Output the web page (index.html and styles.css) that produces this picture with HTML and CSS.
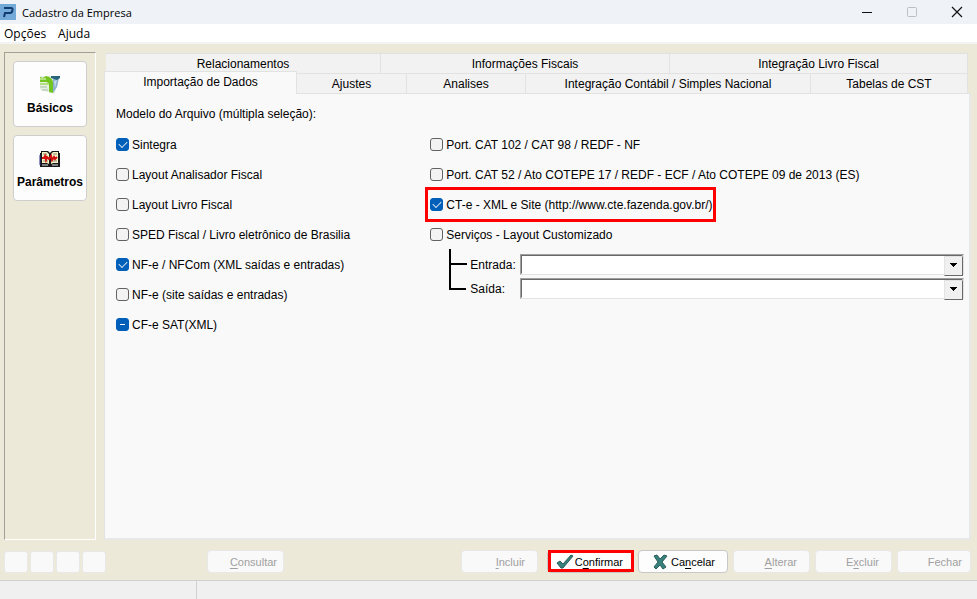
FILE: index.html
```html
<!DOCTYPE html>
<html lang="pt-BR">
<head>
    <meta charset="UTF-8">
    <meta name="viewport" content="width=device-width, initial-scale=1.0">
    <title>Cadastro da Empresa</title>
    <link rel="stylesheet" href="styles.css">
</head>
<body>

    <header class="titlebar">
        <svg class="logo" width="16" height="16" viewBox="0 0 16 16">
            <rect width="16" height="16" fill="#74aad8"/>
            <path d="M4 4H11Q13 4 12.500 6Q12 9 10 9H5L4 13" fill="none" stroke="#123c70" stroke-width="2"/>
        </svg>
        <h1>Cadastro da Empresa</h1>
        <div class="window-buttons">
            <button type="button" aria-label="Minimizar"><svg width="12" height="12"><path d="M1 6.500H11" stroke="#111"/></svg></button>
            <button type="button" aria-label="Maximizar" disabled><svg width="12" height="12"><rect x="1.500" y="1.500" width="9" height="9" rx="1" fill="none" stroke="#bcc0c4"/></svg></button>
            <button type="button" aria-label="Fechar janela"><svg width="12" height="12"><path d="M1 1L11 11M11 1L1 11" stroke="#111" stroke-width="1.200"/></svg></button>
        </div>
    </header>

    <nav class="menubar">
        <button type="button">Opções</button>
        <button type="button">Ajuda</button>
    </nav>

    <div class="workspace">
        <aside class="sidebar">
            <button type="button" class="side-button">
                <svg width="22" height="20" viewBox="0 0 22 20">
                    <path d="M1 1H14L19 3L16 19L9 17L1 15Z" fill="#e6f0e2"/>
                    <path d="M1 2Q4 4 7 1Q13 2 14 7V18L10 17V10L8 7H1Z" fill="#74c41f"/>
                    <path d="M1 4H7M1 9H10" stroke="#b2e07c" stroke-width="2"/>
                    <path d="M14 4L20 3L18 12L14 18Z" fill="#8aafcc"/>
                    <path d="M15 6L18 5L16 13Z" fill="#c3dbe8"/>
                    <path d="M12 1H21V3L18 5L12 3Z" fill="#28647c"/>
                    <path d="M1 12H8M3 15H9" stroke="#a7bea6"/>
                </svg>
                <span>Básicos</span>
            </button>
            <button type="button" class="side-button">
                <svg width="22" height="20" viewBox="0 0 22 20">
                    <path d="M2 2H9L11 4L13 2H20V4H21V18H1V4H2Z" fill="#171717"/>
                    <path d="M3 3H8L10 5V15L8 14H3Z" fill="#f7f3c4"/>
                    <path d="M19 3H14L12 5V15L14 14H19Z" fill="#f7f3c4"/>
                    <path d="M4 5H8M14 5H18M4 12H9M13 12H18" stroke="#8d8b7c"/>
                    <path d="M3 9H5L6 7L7 11L8 8L10 10L12 7L13 11L15 8L16 10L18 8" fill="none" stroke="#d31111" stroke-width="2"/>
                    <path d="M3 16H9M13 16H19" stroke="#e6e6e6"/>
                    <path d="M1 6V16" stroke="#29298c"/>
                </svg>
                <span>Parâmetros</span>
            </button>
        </aside>

        <main class="content">
            <div class="tabs tabs-back">
                <button type="button">Relacionamentos</button>
                <button type="button">Informações Fiscais</button>
                <button type="button">Integração Livro Fiscal</button>
            </div>
            <div class="tabs tabs-front">
                <button type="button" class="active">Importação de Dados</button>
                <button type="button">Ajustes</button>
                <button type="button">Analises</button>
                <button type="button">Integração Contábil / Simples Nacional</button>
                <button type="button">Tabelas de CST</button>
            </div>

            <section class="panel">
                <h2>Modelo do Arquivo (múltipla seleção):</h2>
                <div class="options">
                    <div class="column">
                        <label class="check"><input type="checkbox" checked>Sintegra</label>
                        <label class="check"><input type="checkbox">Layout Analisador Fiscal</label>
                        <label class="check"><input type="checkbox">Layout Livro Fiscal</label>
                        <label class="check"><input type="checkbox">SPED Fiscal / Livro eletrônico de Brasilia</label>
                        <label class="check"><input type="checkbox" checked>NF-e / NFCom (XML saídas e entradas)</label>
                        <label class="check"><input type="checkbox">NF-e (site saídas e entradas)</label>
                        <label class="check"><input type="checkbox" class="partial">CF-e SAT(XML)</label>
                    </div>
                    <div class="column">
                        <label class="check"><input type="checkbox">Port. CAT 102 / CAT 98 / REDF - NF</label>
                        <label class="check"><input type="checkbox">Port. CAT 52 / Ato COTEPE 17 / REDF - ECF / Ato COTEPE 09 de 2013 (ES)</label>
                        <label class="check highlight"><input type="checkbox" checked>CT-e - XML e Site (http://www.cte.fazenda.gov.br/)</label>
                        <label class="check"><input type="checkbox">Serviços - Layout Customizado</label>
                        <div class="layouts">
                            <svg width="18" height="42" viewBox="0 0 18 42"><path d="M1 0V40H17M1 15H18" fill="none" stroke="#000" stroke-width="2"/></svg>
                            <div class="fields">
                                <label for="entrada">Entrada:</label>
                                <div class="combo"><select id="entrada"><option></option></select></div>
                                <label for="saida">Saída:</label>
                                <div class="combo"><select id="saida"><option></option></select></div>
                            </div>
                        </div>
                    </div>
                </div>
            </section>
        </main>
    </div>

    <div class="toolbar">
        <div class="navigation">
            <button type="button" aria-label="Primeiro" disabled></button>
            <button type="button" aria-label="Anterior" disabled></button>
            <button type="button" aria-label="Próximo" disabled></button>
            <button type="button" aria-label="Último" disabled></button>
        </div>
        <button type="button" class="action consult" disabled><span><u>C</u>onsultar</span></button>
        <div class="actions">
            <button type="button" class="action" disabled><span><u>I</u>ncluir</span></button>
            <button type="button" class="action confirm">
                <svg width="18" height="16" viewBox="0 0 18 16"><path d="M1 9L4 7L7 10L15 1L17 2L7 14H5Z" fill="#37817c" stroke="#285d5a"/></svg>
                <span>C<u>o</u>nfirmar</span>
            </button>
            <button type="button" class="action cancel">
                <svg width="15" height="16" viewBox="0 0 15 16"><path d="M1 2L4 1L7 5L11 1L14 2L9 8L13 13L10 15L7 11L3 15L1 13L5 8Z" fill="#37817c" stroke="#285d5a"/></svg>
                <span>Ca<u>n</u>celar</span>
            </button>
            <button type="button" class="action" disabled><span><u>A</u>lterar</span></button>
            <button type="button" class="action" disabled><span>E<u>x</u>cluir</span></button>
            <button type="button" class="action close" disabled><span>Fechar</span></button>
        </div>
    </div>

    <footer class="statusbar"><div></div></footer>

    <script>
        document.querySelector(".partial").indeterminate = true;
    </script>

</body>
</html>
```

FILE: styles.css
```css
* {
    box-sizing: border-box;
}

body {
    display: flex;
    flex-direction: column;
    min-height: 100vh;
    margin: 0;
    background-color: #ece9d8;
    color: #000;
    font-family: "Liberation Sans", Arial, sans-serif;
    font-size: 12px;
}

button {
    padding: 0;
    border: none;
    background-color: transparent;
    color: inherit;
    font: inherit;
}

h1, h2 {
    margin: 0;
    font-size: inherit;
    font-weight: normal;
}

/* Barra de título e menu */
.titlebar {
    display: flex;
    align-items: center;
    gap: 6px;
    height: 24px;
    background-color: #eff3f8;
    font-family: "Open Sans", "Noto Sans", sans-serif;
    font-size: 11px;
}

.window-buttons {
    display: flex;
    margin-left: auto;
}

.window-buttons button {
    display: flex;
    align-items: center;
    justify-content: center;
    width: 45px;
    height: 24px;
}

.window-buttons button:last-child {
    width: 43px;
    padding-left: 3px;
}

.menubar {
    display: flex;
    gap: 12px;
    height: 20px;
    padding-left: 4px;
    border-bottom: 2px solid #f3f3f3;
    background-color: #fff;
    font-family: "Open Sans", "Noto Sans", sans-serif;
}

/* Área principal */
.workspace {
    display: flex;
    flex: 1;
    gap: 8px;
    padding: 8px 6px 0 4px;
}

.sidebar {
    display: flex;
    flex-direction: column;
    flex: none;
    gap: 8px;
    width: 92px;
    padding: 8px;
    border: 1px solid #fff;
    border-top-color: #a09f98;
    border-left-color: #a09f98;
}

.side-button {
    display: flex;
    flex-direction: column;
    align-items: center;
    justify-content: center;
    gap: 6px;
    height: 66px;
    padding-top: 2px;
    border: 1px solid #cecece;
    border-radius: 4px;
    background-color: #fdfdfd;
    font-weight: bold;
}

.content {
    display: flex;
    flex-direction: column;
    flex: 1;
    min-width: 0;
}

.tabs {
    display: grid;
    height: 20px;
    padding: 0 3px 0 2px;
}

.tabs button {
    border: 1px solid #e2e2e2;
    border-width: 1px 1px 0 0;
    background-color: #f2f2f2;
}

.tabs-back {
    grid-template-columns: 275fr 289fr 298fr;
    height: 21px;
    padding-top: 1px;
}

.tabs-front {
    grid-template-columns: 191fr 110fr 119fr 285fr 157fr;
}

.tabs .active {
    z-index: 1;
    margin: -2px 0 -1px -2px;
    padding-bottom: 3px;
    border-left-width: 1px;
    background-color: #f9f9f9;
}

.panel {
    flex: 1;
    padding: 13px 5px 0 11px;
    border: 1px solid #e2e2e2;
    border-right: 2px solid #e8e8e8;
    border-bottom: 2px solid #e8e8e8;
    background-color: #f9f9f9;
}

.panel h2 {
    line-height: 15px;
}

.options {
    display: grid;
    grid-template-columns: 314fr 533fr;
    margin-top: 15px;
}

.column {
    display: flex;
    flex-direction: column;
    align-items: flex-start;
    gap: 15px;
}

.check {
    display: flex;
    align-items: center;
    gap: 3px;
    height: 15px;
    white-space: nowrap;
}

.check input {
    display: grid;
    place-content: center;
    width: 13px;
    height: 13px;
    margin: 0;
    appearance: none;
    border: 1px solid #626262;
    border-radius: 3px;
    background-color: #f3f3f3;
}

.check input:checked, .check input:indeterminate {
    border-color: #005fb8;
    background-color: #005fb8;
}

.check input:checked::before {
    content: "";
    width: 7px;
    height: 4px;
    margin-bottom: 2px;
    border: solid #d5e5f4;
    border-width: 0 0 1px 1px;
    transform: rotate(-45deg);
}

.check input:indeterminate::before {
    content: "";
    width: 5px;
    height: 1px;
    background-color: #fff;
}

.highlight {
    height: 29px;
    margin: -7px -2px;
    padding: 0 1px 0 2px;
    outline: 3px solid #f00;
}

.layouts {
    display: flex;
    align-self: stretch;
    gap: 3px;
    margin-top: -8px;
    padding-left: 19px;
}

.fields {
    display: grid;
    flex: 1;
    grid-template-columns: 50px 1fr;
    row-gap: 3px;
    align-items: center;
    padding-top: 5px;
}

.combo {
    position: relative;
    height: 21px;
    border: 1px solid #e3e3e3;
    border-top-color: #a0a0a0;
    border-left-color: #a0a0a0;
}

.combo select {
    display: block;
    width: 100%;
    height: 19px;
    appearance: none;
    border: 1px solid #fff;
    border-top-color: #696969;
    border-left-color: #696969;
    border-radius: 0;
    background-color: #fff;
}

.combo::after {
    content: "";
    position: absolute;
    top: 1px;
    right: 0;
    width: 17px;
    height: 18px;
    border: 1px solid #e3e3e3;
    border-right-color: #696969;
    border-bottom-color: #696969;
    background: linear-gradient(#000, #000) 5px 6px / 7px 1px no-repeat,
        linear-gradient(#000, #000) 6px 7px / 5px 1px no-repeat,
        linear-gradient(#000, #000) 7px 8px / 3px 1px no-repeat,
        linear-gradient(#000, #000) 8px 9px / 1px 1px no-repeat,
        #f0f0f0;
    pointer-events: none;
}

/* Botões inferiores */
.toolbar {
    display: flex;
    align-items: center;
    height: 40px;
    padding: 3px 6px 0 4px;
    font-size: 11px;
}

.navigation {
    display: flex;
    gap: 2px;
}

.navigation button {
    width: 24px;
    height: 22px;
    border: 1px solid #e8e8e8;
    border-radius: 3px;
    background-color: #f9f9f9;
}

.action {
    display: flex;
    align-items: center;
    justify-content: flex-end;
    gap: 3px;
    width: 77px;
    height: 23px;
    padding-right: 12px;
    border: 1px solid #c8c8c8;
    border-radius: 4px;
    background-color: #fdfdfd;
}

.action:disabled {
    border-color: #e8e8e8;
    background-color: #f9f9f9;
    color: #a0a0a0;
}

.action u {
    text-underline-offset: 2px;
}

.consult {
    margin-left: 101px;
    padding-right: 6px;
}

.actions {
    display: flex;
    gap: 5px;
    margin-left: auto;
}

.confirm {
    position: relative;
    gap: 1px;
    width: 86px;
    margin-left: 4px;
    padding-right: 9px;
}

.confirm::after {
    content: "";
    position: absolute;
    inset: -1px -2px 0 0;
    border: 3px solid #f00;
}

.cancel {
    width: 90px;
}

.close {
    width: 74px;
    padding-right: 8px;
}

.statusbar {
    height: 19px;
    border-top: 1px solid #d0d0d0;
    background-color: #f0f0f0;
}

.statusbar div {
    width: 197px;
    height: 100%;
    border-right: 1px solid #d0d0d0;
}
```
